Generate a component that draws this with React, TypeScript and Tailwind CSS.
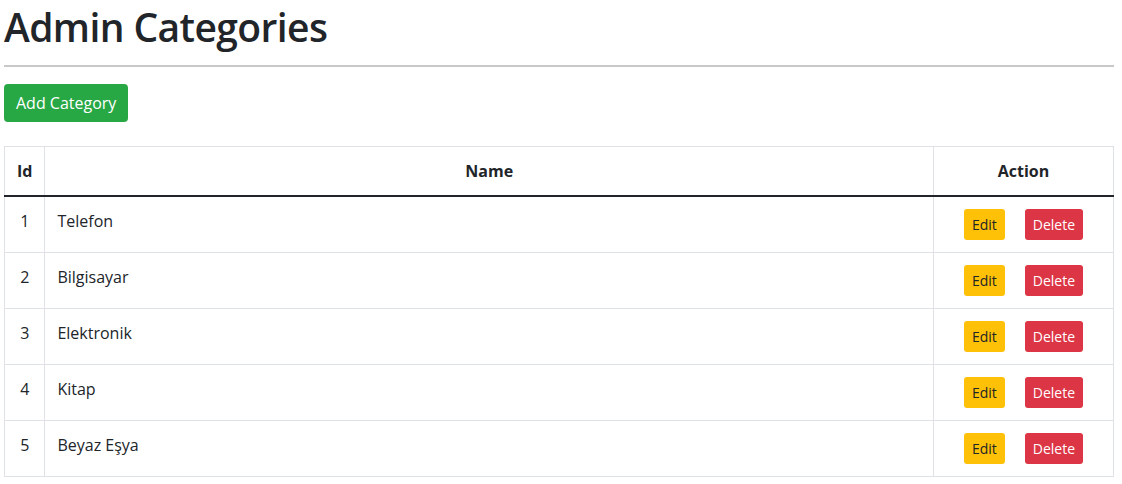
const categories = [
  { id: 1, name: "Telefon" },
  { id: 2, name: "Bilgisayar" },
  { id: 3, name: "Elektronik" },
  { id: 4, name: "Kitap" },
  { id: 5, name: "Beyaz Eşya" },
];

const App = () => {
  return (
    <div
      className="min-h-screen bg-white text-[#212529] pl-[4px]"
      style={{ fontFamily: '"Open Sans", "Noto Sans", sans-serif' }}
    >
      <div className="w-[1110px]">
        <h1 className="pt-[3px] text-[39px] leading-[48px] font-semibold tracking-[-0.6px] m-0">Admin Categories</h1>
        <hr className="mt-[14px] border-0 border-t-2 border-[#c8c8c8]" />

        <button className="mt-[17px] h-[38px] px-[12px] rounded-[4px] bg-[#28a745] text-white text-[16px] leading-6">
          Add Category
        </button>

        {/* Categories table */}
        <table className="mt-[24px] w-full border-collapse border border-[#dee2e6] text-[16px]">
          <thead>
            <tr>
              <th className="w-[40px] border border-[#dee2e6] border-b-2 border-b-[#212529] p-[12px] font-bold leading-6 text-center">
                Id
              </th>
              <th className="border border-[#dee2e6] border-b-2 border-b-[#212529] p-[12px] font-bold leading-6 text-center">
                Name
              </th>
              <th className="w-[180px] border border-[#dee2e6] border-b-2 border-b-[#212529] p-[12px] font-bold leading-6 text-center">
                Action
              </th>
            </tr>
          </thead>
          <tbody>
            {categories.map((c) => (
              <tr key={c.id}>
                <td className="border border-[#dee2e6] p-[12px] align-top leading-6 text-center">{c.id}</td>
                <td className="border border-[#dee2e6] p-[12px] align-top leading-6">{c.name}</td>
                <td className="border border-[#dee2e6] p-[12px] align-top">
                  <div className="flex justify-center gap-[20px]">
                    <button className="h-[31px] px-[8px] rounded-[3px] bg-[#ffc107] text-[#212529] text-[14px] leading-[21px]">
                      Edit
                    </button>
                    <button className="h-[31px] px-[8px] rounded-[3px] bg-[#dc3545] text-white text-[14px] leading-[21px]">
                      Delete
                    </button>
                  </div>
                </td>
              </tr>
            ))}
          </tbody>
        </table>
      </div>
    </div>
  );
};

export default App;
